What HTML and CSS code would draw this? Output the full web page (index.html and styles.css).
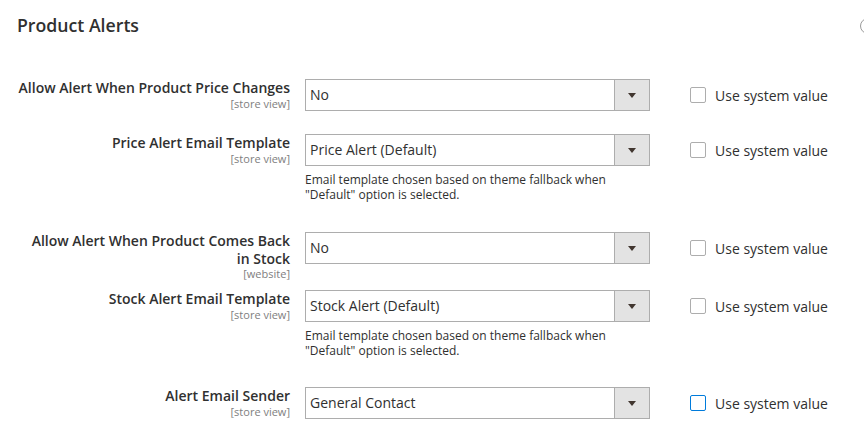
FILE: index.html
```html
<!DOCTYPE html>
<html>
<head>
<meta charset="utf-8">
<link rel="stylesheet" href="styles.css">
</head>
<body>
<div class="section">
  <div class="section-head">
    <span class="section-title">Product Alerts</span>
    <span class="collapse-icon"></span>
  </div>
  <div class="fields">
    <div class="row">
      <div class="label"><span class="label-text">Allow Alert When Product Price Changes</span><span class="scope">[store view]</span></div>
      <div class="control">
        <div class="select"><span class="select-value">No</span><span class="select-btn"><span class="arrow"></span></span></div>
      </div>
      <label class="inherit"><span class="check"></span><span>Use system value</span></label>
    </div>
    <div class="row">
      <div class="label"><span class="label-text">Price Alert Email Template</span><span class="scope">[store view]</span></div>
      <div class="control">
        <div class="select"><span class="select-value">Price Alert (Default)</span><span class="select-btn"><span class="arrow"></span></span></div>
        <p class="note">Email template chosen based on theme fallback when "Default" option is selected.</p>
      </div>
      <label class="inherit"><span class="check"></span><span>Use system value</span></label>
    </div>
    <div class="row">
      <div class="label"><span class="label-text">Allow Alert When Product Comes Back in Stock</span><span class="scope">[website]</span></div>
      <div class="control">
        <div class="select"><span class="select-value">No</span><span class="select-btn"><span class="arrow"></span></span></div>
      </div>
      <label class="inherit"><span class="check"></span><span>Use system value</span></label>
    </div>
    <div class="row">
      <div class="label"><span class="label-text">Stock Alert Email Template</span><span class="scope">[store view]</span></div>
      <div class="control">
        <div class="select"><span class="select-value">Stock Alert (Default)</span><span class="select-btn"><span class="arrow"></span></span></div>
        <p class="note note-last">Email template chosen based on theme fallback when "Default" option is selected.</p>
      </div>
      <label class="inherit"><span class="check"></span><span>Use system value</span></label>
    </div>
    <div class="row">
      <div class="label"><span class="label-text">Alert Email Sender</span><span class="scope">[store view]</span></div>
      <div class="control">
        <div class="select"><span class="select-value">General Contact</span><span class="select-btn"><span class="arrow"></span></span></div>
      </div>
      <label class="inherit"><span class="check check-focus"></span><span>Use system value</span></label>
    </div>
  </div>
</div>
</body>
</html>
```
FILE: styles.css
```css
html, body {
  margin: 0;
  padding: 0;
  background: #ffffff;
  overflow: hidden;
}
body {
  font-family: "Open Sans", "Noto Sans", sans-serif;
  color: #303030;
  width: 864px;
  height: 430px;
}
.section-head {
  display: flex;
  align-items: center;
  justify-content: space-between;
  padding: 15px 0 0 17px;
  height: 21px;
}
.section-title {
  font-size: 17.7px;
  line-height: 21px;
  font-weight: 600;
  color: #303030;
}
.collapse-icon {
  width: 16px;
  height: 16px;
  box-sizing: border-box;
  border: 1px solid #9a9a9a;
  border-radius: 50%;
  margin-right: -12px;
  flex: none;
}
.fields {
  display: flex;
  flex-direction: column;
  gap: 23px;
  margin-top: 43px;
}
.row {
  display: grid;
  grid-template-columns: 290px 345px auto;
  column-gap: 15px;
  align-items: start;
}
.label {
  text-align: right;
  padding-left: 17px;
  font-size: 14px;
  line-height: 17.5px;
  font-weight: 600;
  color: #303030;
}
.label-text {
  display: block;
}
.scope {
  display: block;
  font-size: 11px;
  line-height: 13px;
  font-weight: 400;
  color: #808080;
  margin-bottom: -13px;
}
.control {
  display: flex;
  flex-direction: column;
}
.select {
  display: flex;
  height: 32px;
  box-sizing: border-box;
  border: 1px solid #adadad;
  background: #fff;
}
.select-value {
  flex: 1;
  padding-left: 4px;
  font-size: 14px;
  line-height: 30px;
  color: #303030;
}
.select-btn {
  width: 34px;
  flex: none;
  border-left: 1px solid #adadad;
  background: #e3e3e3;
  display: flex;
  align-items: center;
  justify-content: center;
}
.arrow {
  width: 0;
  height: 0;
  border-left: 4px solid transparent;
  border-right: 4px solid transparent;
  border-top: 5px solid #41362f;
  margin-top: 1px;
}
.note {
  margin: 6px 0 7px 0;
  font-size: 12px;
  line-height: 15px;
  color: #303030;
  width: 320px;
}
.note-last {
  margin-bottom: 6px;
}
.inherit {
  display: flex;
  align-items: center;
  gap: 9px;
  height: 32px;
  padding-left: 25px;
  font-size: 14px;
  color: #303030;
}
.check {
  width: 16px;
  height: 16px;
  box-sizing: border-box;
  border: 1px solid #adadad;
  border-radius: 2px;
  background: #fff;
  flex: none;
}
.check-focus {
  border-color: #007bdb;
}
```
